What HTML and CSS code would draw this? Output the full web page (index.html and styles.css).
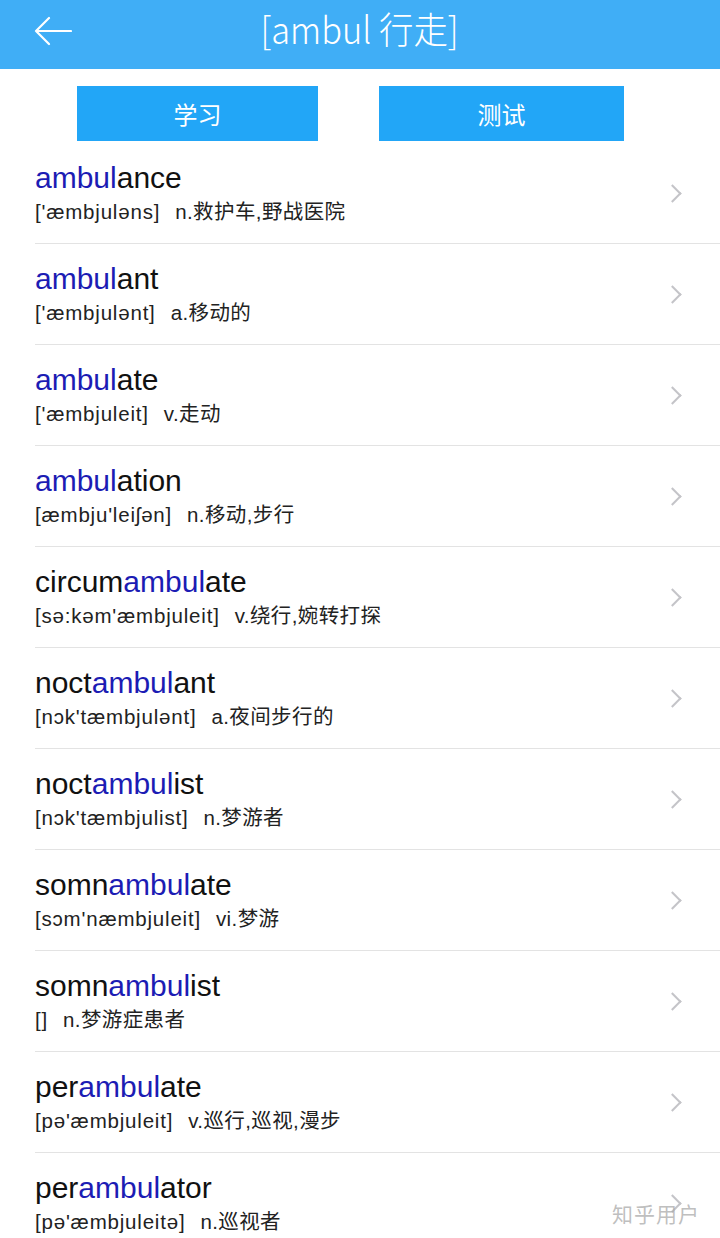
FILE: index.html
```html
<!DOCTYPE html>
<html lang="zh">
<head>
<meta charset="utf-8">
<link rel="stylesheet" href="styles.css">
</head>
<body>
<header class="topbar">
  <svg class="back" width="38" height="30" viewBox="0 0 38 30"><path d="M37 15H2M15 2L2 15l13 13" fill="none" stroke="#fff" stroke-width="2.2" stroke-linecap="round" stroke-linejoin="round"/></svg>
  <h1 class="title">[ambul 行走]</h1>
</header>
<div class="actions">
  <div class="btn btn-learn">学习</div>
  <div class="btn btn-test">测试</div>
</div>
<ul class="list">
  <li class="row"><div class="text"><div class="word"><span class="hl">ambul</span>ance</div><div class="def"><span class="ph">['æmbjuləns]</span>n.救护车,野战医院</div></div><span class="chev"></span></li>
  <li class="row"><div class="text"><div class="word"><span class="hl">ambul</span>ant</div><div class="def"><span class="ph">['æmbjulənt]</span>a.移动的</div></div><span class="chev"></span></li>
  <li class="row"><div class="text"><div class="word"><span class="hl">ambul</span>ate</div><div class="def"><span class="ph">['æmbjuleit]</span>v.走动</div></div><span class="chev"></span></li>
  <li class="row"><div class="text"><div class="word"><span class="hl">ambul</span>ation</div><div class="def"><span class="ph">[æmbju'leiʃən]</span>n.移动,步行</div></div><span class="chev"></span></li>
  <li class="row"><div class="text"><div class="word">circum<span class="hl">ambul</span>ate</div><div class="def"><span class="ph">[sə:kəm'æmbjuleit]</span>v.绕行,婉转打探</div></div><span class="chev"></span></li>
  <li class="row"><div class="text"><div class="word">noct<span class="hl">ambul</span>ant</div><div class="def"><span class="ph">[nɔk'tæmbjulənt]</span>a.夜间步行的</div></div><span class="chev"></span></li>
  <li class="row"><div class="text"><div class="word">noct<span class="hl">ambul</span>ist</div><div class="def"><span class="ph">[nɔk'tæmbjulist]</span>n.梦游者</div></div><span class="chev"></span></li>
  <li class="row"><div class="text"><div class="word">somn<span class="hl">ambul</span>ate</div><div class="def"><span class="ph">[sɔm'næmbjuleit]</span>vi.梦游</div></div><span class="chev"></span></li>
  <li class="row"><div class="text"><div class="word">somn<span class="hl">ambul</span>ist</div><div class="def"><span class="ph">[]</span>n.梦游症患者</div></div><span class="chev"></span></li>
  <li class="row"><div class="text"><div class="word">per<span class="hl">ambul</span>ate</div><div class="def"><span class="ph">[pə'æmbjuleit]</span>v.巡行,巡视,漫步</div></div><span class="chev"></span></li>
  <li class="row"><div class="text"><div class="word">per<span class="hl">ambul</span>ator</div><div class="def"><span class="ph">[pə'æmbjuleitə]</span>n.巡视者</div></div><span class="chev"></span></li>
</ul>
<div class="watermark">知乎用户</div>
</body>
</html>
```
FILE: styles.css
```css
* { box-sizing: border-box; }
html, body { margin: 0; padding: 0; }
body {
  width: 720px;
  height: 1238px;
  overflow: hidden;
  background: #fff;
  font-family: "Liberation Sans", "Noto Sans CJK SC", sans-serif;
  color: #111;
  position: relative;
}
.topbar {
  height: 69px;
  background: #40aef6;
  display: flex;
  align-items: center;
  justify-content: center;
  position: relative;
}
.back {
  position: absolute;
  left: 34px;
  top: 16px;
}
.title {
  margin: 0;
  font-family: "Noto Sans CJK SC", "Liberation Sans", sans-serif;
  font-weight: 300;
  font-size: 37px;
  color: #fff;
  line-height: 1;
  transform: scaleX(0.93);
  margin-top: -12px;
}
.actions {
  display: flex;
  padding: 17px 0 0 77px;
  gap: 61px;
  height: 74px;
}
.btn {
  height: 55px;
  background: #22a6f7;
  color: #fff;
  font-family: "Noto Sans CJK SC", sans-serif;
  font-size: 24px;
  display: flex;
  align-items: center;
  justify-content: center;
}
.btn-learn { width: 241px; }
.btn-test { width: 245px; }
.list {
  list-style: none;
  margin: 0;
  padding: 0 0 0 35px;
}
.row {
  display: flex;
  align-items: center;
  height: 101px;
  border-bottom: 1px solid #e3e3e3;
  padding-right: 41px;
}
.text { flex: 1; padding-top: 1px; }
.word {
  font-size: 30px;
  line-height: 34px;
  color: #111;
}
.hl { color: #1c1cb4; }
.def {
  margin-top: 3px;
  font-size: 20.5px;
  line-height: 28px;
  color: #222;
  letter-spacing: 0.4px;
}
.ph {
  display: inline-block;
  margin-right: 15px;
  letter-spacing: 0.8px;
}
.chev {
  width: 13px;
  height: 13px;
  border-top: 2.5px solid #c4c4c8;
  border-right: 2.5px solid #c4c4c8;
  transform: rotate(45deg);
  margin-top: 1px;
}
.watermark {
  position: absolute;
  left: 612px;
  top: 1198px;
  font-family: "Noto Sans CJK SC", sans-serif;
  font-size: 21px;
  color: rgba(170, 170, 170, 0.75);
  letter-spacing: 1px;
}
```
